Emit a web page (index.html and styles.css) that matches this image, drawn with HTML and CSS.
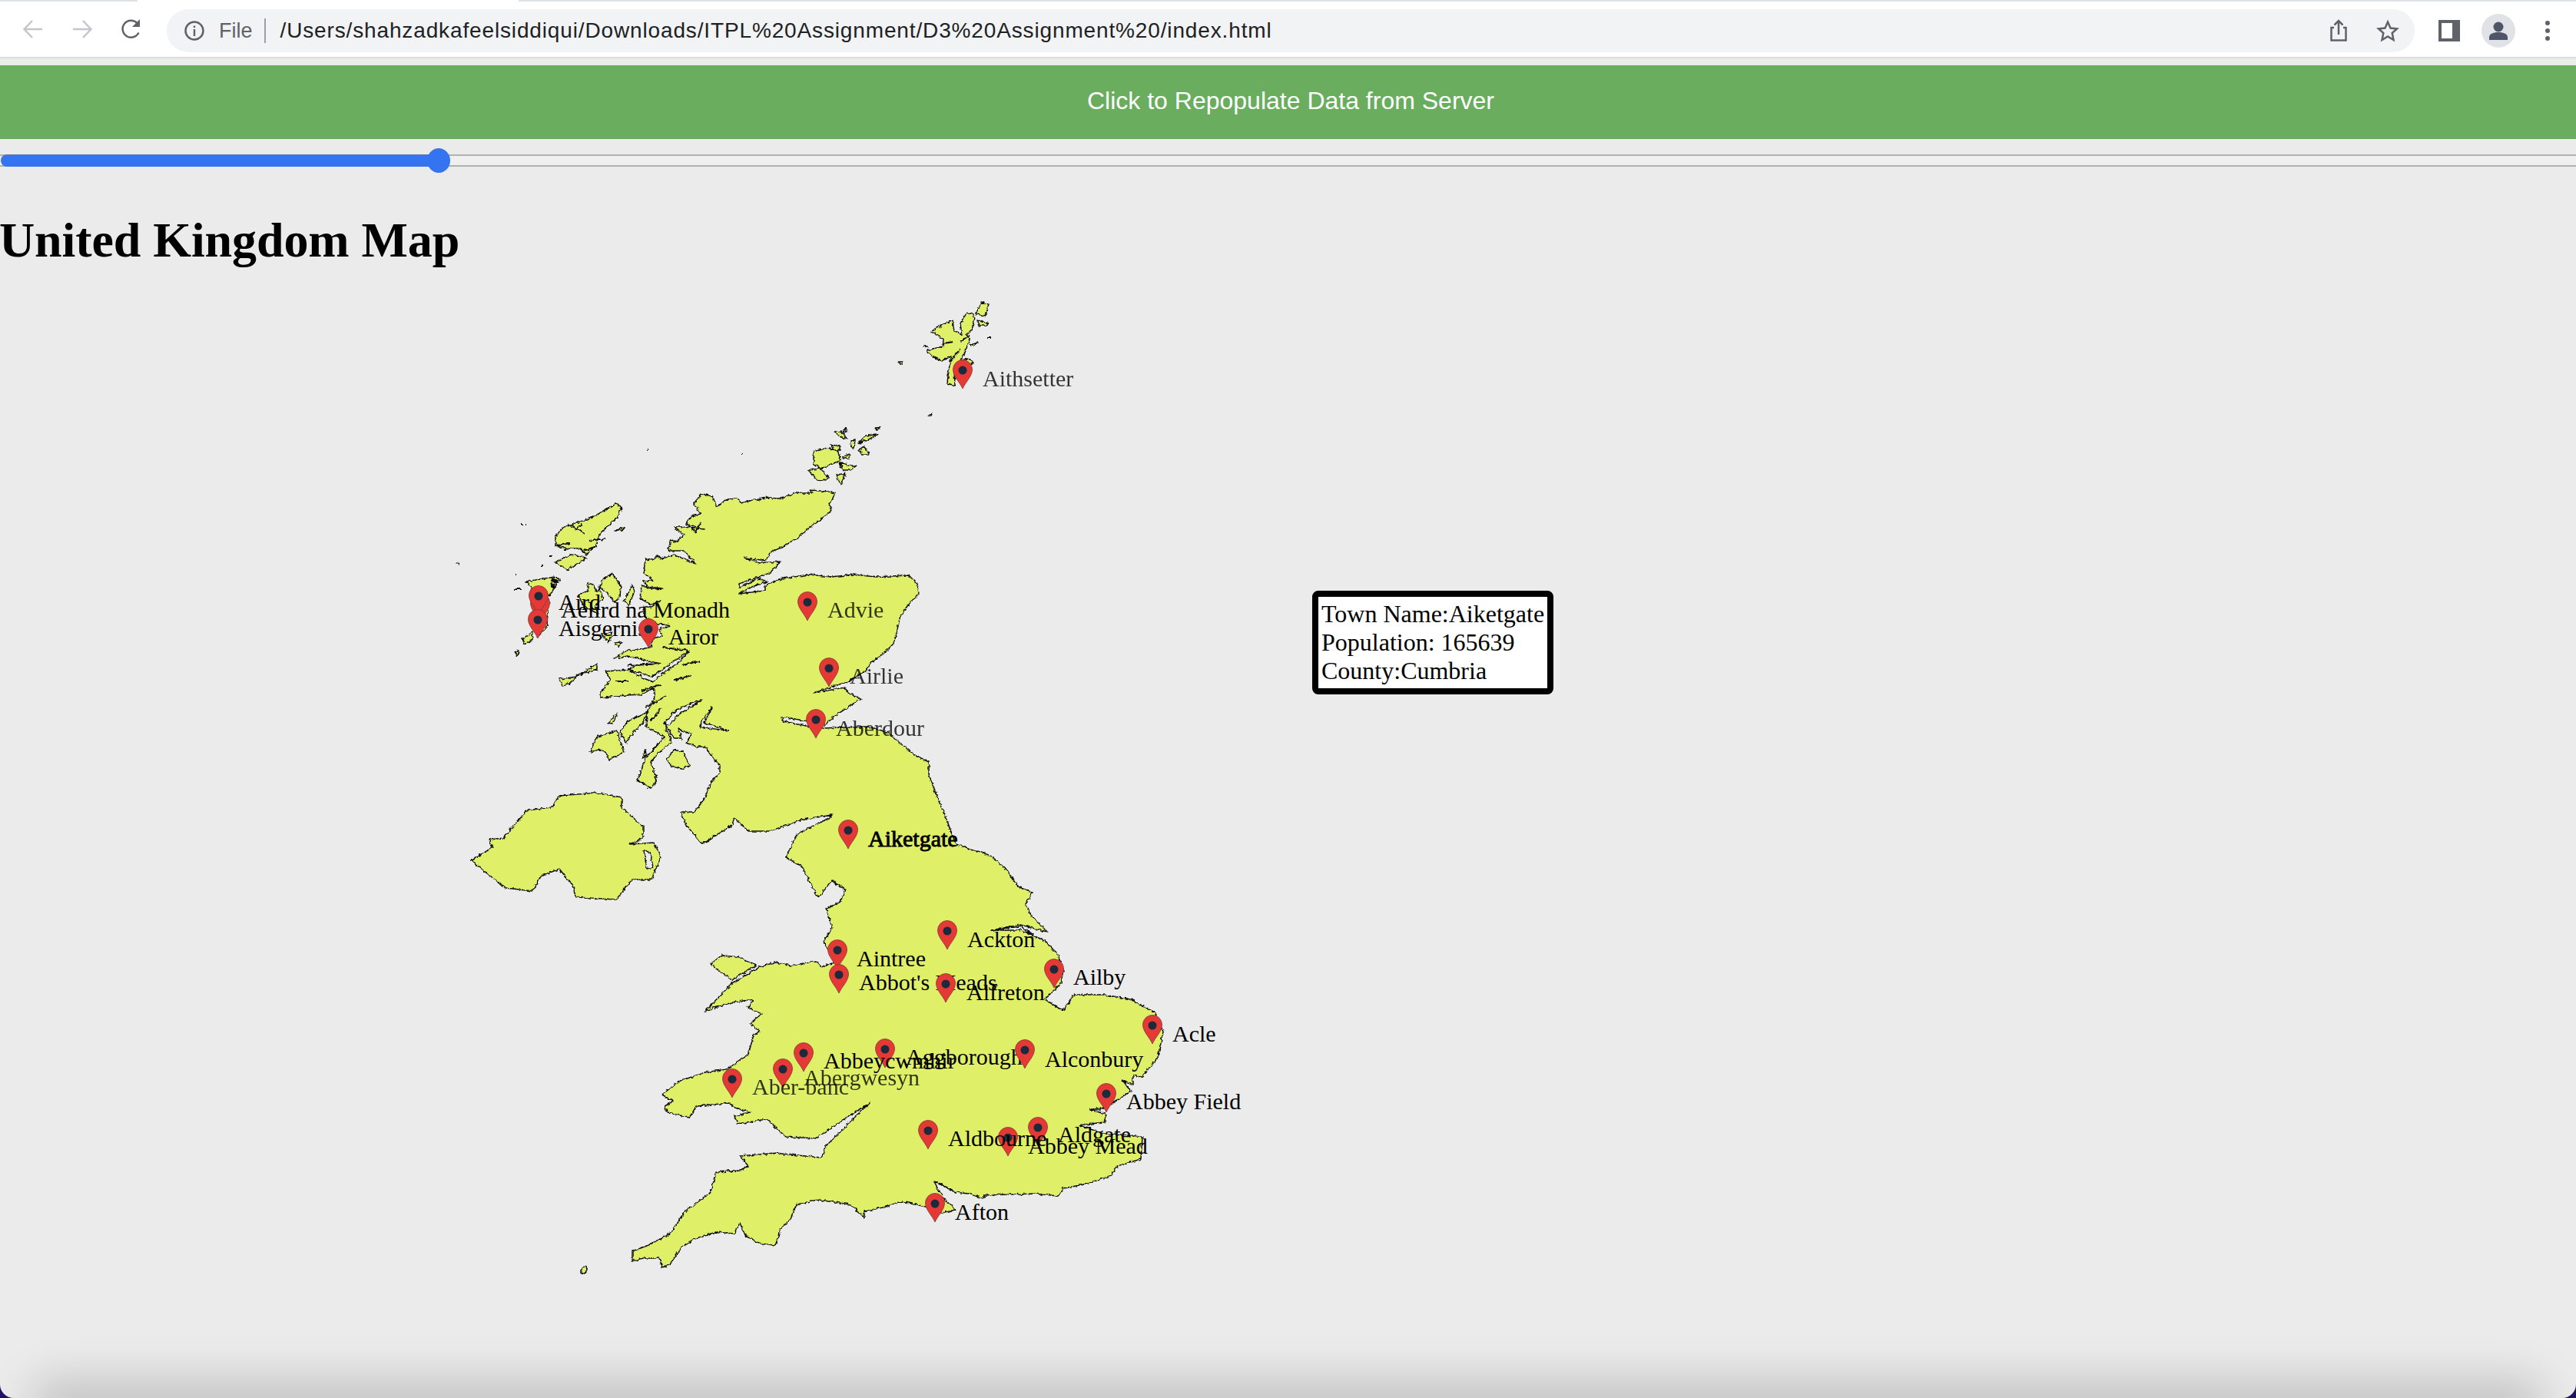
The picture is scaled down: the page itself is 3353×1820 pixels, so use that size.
FILE: index.html
```html
<!doctype html>
<html>

<head>
	<meta charset=utf-8>
	<title>United Kingdom Map</title>
	<link rel="stylesheet" href="styles.css">
</head>

<body>
	<div class="page">
		<header class="toolbar">
			<div class="tabstrip"><span class="tabstrip-gap"></span></div>
			<div class="toolbar-row">
				<div class="nav">
					<svg class="nav-icon" viewBox="0 0 30 30"><path class="ic-faint" d="M27 15H4M14 4L3.5 15L14 26"/></svg>
					<svg class="nav-icon" viewBox="0 0 30 30"><path class="ic-faint" d="M3 15H26M16 4L26.500 15L16 26"/></svg>
					<svg class="nav-icon" viewBox="0 0 30 30"><path class="ic-dark" d="M24.500 19.500A11 11 0 1 1 22.500 7"/><path class="ic-fill" d="M26 2V12H16Z"/></svg>
				</div>
				<div class="omnibox">
					<svg class="info-icon" viewBox="0 0 26 26"><circle class="ic-dark" cx="13" cy="13" r="11.500"/><path class="ic-fill" d="M11.800 11h2.400v9h-2.400zM11.800 6.500h2.400v2.400h-2.400z"/></svg>
					<span class="scheme">File</span>
					<span class="divider"></span>
					<span class="url">/Users/shahzadkafeelsiddiqui/Downloads/ITPL%20Assignment/D3%20Assignment%20/index.html</span>
					<span class="spacer"></span>
					<svg class="omni-icon" viewBox="0 0 30 30"><path class="ic-dark" d="M9 11H5.500V27.500H24.500V11H21M15 20V2M9.500 7.500L15 2L20.500 7.500"/></svg>
					<svg class="omni-icon" viewBox="0 0 30 30"><path class="ic-dark" d="M15 3.500L18.500 11.500L27 12.500L20.700 18L22.500 27L15 22.500L7.500 27L9.300 18L3 12.500L11.500 11.500Z"/></svg>
				</div>
				<div class="tools">
					<svg class="panel-icon" viewBox="0 0 28 28"><path class="ic-fill" d="M0 0H28V28H0ZM4 4V24H18V4Z"/></svg>
					<span class="avatar">
						<svg viewBox="0 0 44 44"><circle cx="22" cy="17" r="6.500"/><path d="M10 34V31C10 26 15 24 22 24S34 26 34 31V34Z"/></svg>
					</span>
					<span class="kebab"><i></i><i></i><i></i></span>
				</div>
			</div>
		</header>

		<button class="repopulate">Click to Repopulate Data from Server</button>

		<div class="slider">
			<div class="slider-track"></div>
			<div class="slider-fill" style="width:571px"></div>
			<div class="slider-thumb" style="left:556px"></div>
		</div>

		<h1 class="title">United Kingdom Map</h1>

		<svg class="map" viewBox="0 370 3353 1450" width="3353" height="1450">
			<defs>
				<filter id="rough" x="-5%" y="-5%" width="110%" height="110%">
					<feTurbulence type="fractalNoise" baseFrequency="0.22" numOctaves="3" seed="4"/>
					<feDisplacementMap in="SourceGraphic" scale="5" xChannelSelector="R" yChannelSelector="G"/>
				</filter>
				<g id="pin">
					<path class="pin-body" d="M0 24C-4 15 -12.500 8 -12.500 -1A12.500 12.500 0 1 1 12.500 -1C12.500 8 4 15 0 24Z"/>
					<circle class="pin-dot" r="5.500"/>
				</g>
			</defs>

			<g class="land" filter="url(#rough)">
				<!-- great britain -->
				<path d="M913 644L927 647L933 660L947 651L959 650L965 656L979 652L999 649L1013 650L1036 643L1059 643L1054 639L1079 641L1087 643L1079 660L1083 665L1068 678L1054 687L1041 699L1019 713L1002 720L997 731L969 727L988 734L1016 732L1002 747L962 761L962 766L988 754L999 758L979 765L961 774L996 770L996 763L1019 754L1054 749L1082 752L1111 749L1140 752L1183 750L1194 761L1196 774L1183 787L1171 805L1168 821L1163 839L1148 854L1134 863L1128 874L1105 888L1059 903L1100 896L1102 901L1120 911L1105 921L1088 932L1074 944L1018 934L1019 940L1054 947L1071 949L1097 948L1134 948L1157 955L1171 968L1191 984L1209 993L1209 1008L1220 1040L1230 1062L1244 1100L1290 1115L1311 1134L1325 1155L1344 1163L1335 1178L1342 1193L1363 1214L1328 1205L1290 1212L1328 1211L1360 1226L1377 1243L1384 1264L1381 1281L1360 1302L1384 1317L1398 1296L1437 1296L1472 1302L1503 1319L1514 1344L1507 1378L1486 1403L1475 1401L1475 1414L1461 1407L1472 1422L1451 1435L1433 1445L1419 1445L1440 1452L1437 1462L1405 1466L1437 1477L1487 1481L1485 1510L1454 1519L1447 1531L1416 1542L1384 1548L1377 1558L1346 1555L1283 1557L1279 1561L1261 1555L1244 1553L1223 1542L1216 1539L1223 1553L1230 1563L1244 1576L1226 1580L1205 1572L1174 1565L1153 1572L1125 1578L1125 1586L1107 1569L1065 1563L1037 1569L1029 1588L1016 1601L1009 1622L988 1620L970 1609L963 1593L956 1607L932 1605L904 1614L886 1626L872 1647L862 1651L858 1639L837 1639L823 1643L823 1630L844 1622L872 1607L890 1580L925 1553L932 1527L963 1525L974 1519L963 1506L1009 1502L1069 1508L1076 1492L1114 1454L1132 1437L1093 1462L1062 1483L1023 1481L998 1458L960 1464L956 1454L977 1449L956 1443L949 1437L907 1441L897 1456L869 1449L865 1441L876 1435L862 1426L883 1409L918 1397L946 1393L974 1374L981 1348L989 1344L977 1334L991 1321L974 1313L981 1302L953 1306L918 1317L953 1281L988 1260L1009 1254L1030 1258L1062 1252L1069 1260L1086 1254L1072 1226L1083 1209L1076 1184L1093 1176L1100 1159L1083 1148L1065 1169L1055 1151L1044 1129L1023 1117L1037 1087L1079 1066L1083 1062L1044 1068L1002 1083L974 1083L956 1066L953 1075L914 1100L893 1075L886 1058L904 1058L917 1040L927 1017L937 1007L937 998L917 973L907 973L893 968L900 957L883 950L887 962L877 962L865 942L868 953L875 968L860 978L847 993L855 1017L847 1027L830 1017L840 988L855 972L865 960L841 947L842 930L853 907L850 897L835 905L800 907L782 910L782 903L795 885L788 875L817 873L830 867L860 865L817 855L800 858L815 848L832 847L847 843L850 832L862 829L857 820L873 816L857 813L838 803L837 790L847 792L860 783L847 788L833 780L835 763L850 768L863 767L843 765L837 757L850 757L838 747L840 729L850 730L855 725L863 728L877 723L890 728L905 735L890 718L870 718L873 703L880 707L890 697L877 687L890 687L917 690L893 683L900 673L912 670L903 657Z"/>
				<path class="loch" d="M817 873L838 884L850 889L862 878L885 862L897 848L880 860L862 873L848 882L830 876Z"/>
				<path class="loch" d="M865 942L880 925L905 915L913 913L882 932L872 945Z"/>
				<path class="loch" d="M913 940L927 922L917 942L948 952L912 948Z"/>
				<path class="loch" d="M1290 1212L1328 1207L1345 1217L1328 1212Z"/>
				<path class="cut" d="M860 865L817 867M910 862L887 867M900 880L877 887M867 907L840 922M860 923L847 940M863 844L897 848M800 888L817 888M893 683L905 692M905 695L912 680M835 900L860 892"/>
				<!-- northern ireland -->
				<path d="M613 1121L641 1104L637 1094L655 1092L686 1056L718 1052L728 1037L777 1033L809 1039L809 1052L837 1077L837 1092L820 1100L851 1098L860 1117L848 1146L823 1146L802 1172L749 1169L746 1155L728 1132L704 1142L693 1161L658 1157L634 1138Z"/>
				<path class="loch" d="M838 1108L846 1110L850 1130L842 1132Z"/>
				<!-- anglesey -->
				<path d="M925 1256L939 1245L963 1247L984 1258L953 1277L932 1262Z"/>
				<!-- hebrides -->
				<path d="M803 656L809 663L803 675L792 685L780 698L775 712L763 723L755 715L740 715L723 712L723 700L732 688L747 683L770 675L788 665Z"/>
				<path class="cut" d="M740 683L760 695M723 712L742 708M767 705L788 702M760 718L777 712M748 692L758 682"/>
				<path d="M723 733L743 723L757 725L763 728L738 743Z"/>
				<path d="M800 692L812 687L810 692Z"/>
				<path d="M685 758L703 755L723 752L728 755L720 770L715 777L695 772Z"/>
				<path class="cut thick" d="M718 755L726 760M716 760L722 766"/>
				<path d="M703 787L715 782L713 797L712 817L700 830Z"/>
				<path d="M680 833L693 823L693 835L683 840Z"/>
				<path d="M670 850L675 848L673 855Z"/>
				<path class="cut" d="M678 683h2M683 683h2M670 768h10M670 749h2M715 725h3M735 717h2M705 737h3"/>
				<path d="M785 755L797 748L808 763L807 778L800 785L790 772L780 765L785 780L775 790L778 800L760 790L753 776L765 770L765 760L772 762L778 772Z"/>
				<path d="M813 783L823 763L825 772L818 790Z"/>
				<path d="M783 825L797 825L793 837L785 830Z"/>
				<path d="M800 838L808 837L805 843Z"/>
				<path d="M728 885L750 882L777 865L777 872L753 880L740 892L732 893Z"/>
				<path d="M792 942L802 930L803 933L797 943Z"/>
				<path d="M807 955L817 940L843 928L838 940L820 960L815 968Z"/>
				<path d="M768 980L777 960L803 952L812 980L793 990L788 980L780 977Z"/>
				<path d="M837 987L840 977L841 985Z"/>
				<path d="M868 990L877 977L890 980L897 998L887 1002L873 998Z"/>
				<!-- shetland -->
				<path d="M1207 457L1227 452L1228 443L1213 433L1220 427L1230 422L1240 418L1242 432L1252 437L1250 422L1258 408L1267 410L1268 418L1265 430L1257 437L1262 443L1257 457L1250 470L1260 468L1267 473L1257 477L1242 483L1243 503L1233 500L1235 483L1238 465L1227 470L1217 467L1207 460Z"/>
				<path class="cut" d="M1228 448L1240 446M1238 470L1250 455M1250 445L1262 438"/>
				<path d="M1270 410L1277 395L1287 397L1282 412Z"/>
				<path d="M1272 418L1287 422L1283 425L1275 425Z"/>
				<path d="M1263 450L1273 446L1268 452Z"/>
				<path d="M1203 451L1208 452L1207 453Z"/>
				<path d="M1170 472L1175 472L1175 476L1172 475Z"/>
				<path d="M1209 542L1213 539L1212 543Z"/>
				<path class="cut" d="M1285 441H1290"/>
				<!-- orkney -->
				<path d="M1059 589L1077 584L1091 589L1094 600L1079 607L1068 611L1059 604Z"/>
				<path d="M1052 613L1068 611L1079 624L1065 627Z"/>
				<path d="M1093 603L1107 607L1115 607L1107 613L1097 613Z"/>
				<path d="M1088 620L1100 617L1095 632Z"/>
				<path d="M1082 580L1093 582L1093 587L1085 587Z"/>
				<path d="M1085 563L1095 563L1103 573L1095 570Z"/>
				<path d="M1100 558L1103 563L1098 564Z"/>
				<path d="M1107 575L1113 573L1112 585L1108 583Z"/>
				<path d="M1117 578L1127 568L1142 567L1127 575Z"/>
				<path d="M1139 558L1145 557L1142 562Z"/>
				<path d="M1118 587L1125 583L1132 592L1122 592Z"/>
				<path d="M1098 595L1107 593L1105 598L1098 598Z"/>
				<!-- specks -->
				<path class="cut" d="M842 587h2M814 590h1M966 591h1M594 733l4 2"/>
				<path d="M757 1652L763 1648L764 1656L757 1660Z"/>
			</g>

			<use href="#pin" x="1253" y="483"/><text class="label faded" x="1279" y="502">Aithsetter</text>
			<use href="#pin" x="1051" y="785"/><text class="label faded" x="1077" y="803">Advie</text>
			<use href="#pin" x="1079" y="871"/><text class="label faded" x="1106" y="889">Airlie</text>
			<use href="#pin" x="1062" y="938"/><text class="label faded" x="1088" y="957">Aberdour</text>
			<use href="#pin" x="703" y="787"/><text class="label" x="730" y="803">Aelird na Monadh</text>
			<use href="#pin" x="701" y="777"/><text class="label" x="727" y="793">Aird</text>
			<use href="#pin" x="700" y="808"/><text class="label" x="727" y="827">Aisgernis</text>
			<use href="#pin" x="844" y="820"/><text class="label" x="870" y="838">Airor</text>
			<use href="#pin" x="1104" y="1082"/><text class="label label-active" x="1130" y="1101">Aiketgate</text>
			<use href="#pin" x="1233" y="1213"/><text class="label" x="1259" y="1232">Ackton</text>
			<use href="#pin" x="1090" y="1238"/><text class="label" x="1115" y="1257">Aintree</text>
			<use href="#pin" x="1092" y="1270"/><text class="label" x="1118" y="1288">Abbot's Meads</text>
			<use href="#pin" x="1231" y="1282"/><text class="label" x="1258" y="1301">Alfreton</text>
			<use href="#pin" x="1372" y="1263"/><text class="label" x="1397" y="1281">Ailby</text>
			<use href="#pin" x="1500" y="1336"/><text class="label" x="1526" y="1355">Acle</text>
			<use href="#pin" x="1152" y="1367"/><text class="label" x="1179" y="1385">Aggborough</text>
			<use href="#pin" x="1046" y="1372"/><text class="label" x="1072" y="1390">Abbeycwmhir</text>
			<use href="#pin" x="1019" y="1393"/><text class="label faded" x="1046" y="1412">Abergwesyn</text>
			<use href="#pin" x="953" y="1406"/><text class="label faded" x="979" y="1424">Aber-banc</text>
			<use href="#pin" x="1334" y="1368"/><text class="label" x="1360" y="1388">Alconbury</text>
			<use href="#pin" x="1440" y="1425"/><text class="label" x="1466" y="1443">Abbey Field</text>
			<use href="#pin" x="1351" y="1469"/><text class="label" x="1377" y="1486">Aldgate</text>
			<use href="#pin" x="1312" y="1482"/><text class="label" x="1338" y="1501">Abbey Mead</text>
			<use href="#pin" x="1208" y="1473"/><text class="label" x="1234" y="1491">Aldbourne</text>
			<use href="#pin" x="1217" y="1568"/><text class="label" x="1243" y="1587">Afton</text>
		</svg>

		<div class="tooltip">
			Town Name:Aiketgate<br>
			Population: 165639<br>
			County:Cumbria
		</div>

		<div class="dock-shadow"></div>
	</div>
</body>
</html>
```

FILE: styles.css
```css
html, body{
	width: 100%;
	height: 100%;
	margin: 0; padding: 0;
	background-color: #1d1464;
}

.page{
	position: relative;
	width: 3353px;
	height: 1820px;
	overflow: hidden;
	background-color: #ebebeb;
	border-radius: 0 0 18px 18px;
	font-family: "Liberation Serif", serif;
}

/* browser bar */
.toolbar{
	height: 76px;
	margin-bottom: 9px;
	background-color: #fff;
	border-bottom: 2px solid #dcdddf;
	box-sizing: border-box;
}

.tabstrip{
	height: 2px;
	background-color: #dee1e6;
	padding-left: 179px;
}

.tabstrip-gap{
	display: block;
	width: 496px;
	height: 2px;
	background-color: #fff;
}

.toolbar-row{
	display: flex;
	align-items: center;
	height: 72px;
	font-family: "Liberation Sans", sans-serif;
}

.nav{
	display: flex;
	gap: 34px;
	width: 217px;
	padding-left: 28px;
	box-sizing: border-box;
}

.nav-icon{
	width: 30px;
	height: 30px;
}

.ic-faint, .ic-dark{
	fill: none;
	stroke-width: 2.500;
}

.ic-faint{
	stroke: #c4c6c9;
}

.ic-dark{
	stroke: #5f6368;
}

.ic-fill{
	fill: #5f6368;
}

.omnibox{
	display: flex;
	align-items: center;
	width: 2926px;
	height: 56px;
	margin-top: 4px;
	padding: 0 20px 0 23px;
	box-sizing: border-box;
	background-color: #f1f3f4;
	border-radius: 28px;
}

.info-icon{
	width: 26px;
	height: 26px;
	margin-right: 19px;
}

.scheme{
	font-size: 27px;
	color: #5f6368;
}

.divider{
	width: 2px;
	height: 32px;
	margin: 0 19px 0 15px;
	background-color: #9aa0a6;
}

.url{
	font-size: 28px;
	letter-spacing: 0.86px;
	color: #202124;
	white-space: nowrap;
}

.spacer{
	flex: 1;
}

.omni-icon{
	width: 30px;
	height: 30px;
	margin-left: 34px;
}

.tools{
	display: flex;
	align-items: center;
	margin-left: 31px;
	margin-top: 4px;
}

.panel-icon{
	width: 28px;
	height: 28px;
}

.avatar{
	display: block;
	width: 44px;
	height: 44px;
	margin-left: 28px;
	border-radius: 50%;
	background-color: #e0e2e7;
}

.avatar svg{
	display: block;
	fill: #4d5566;
}

.kebab{
	display: flex;
	flex-direction: column;
	gap: 4px;
	margin-left: 39px;
}

.kebab i{
	display: block;
	width: 6px;
	height: 6px;
	border-radius: 50%;
	background-color: #5f6368;
}

/* page */
.repopulate{
	display: block;
	width: 100%;
	height: 96px;
	border: 0;
	padding: 0 0 3px 7px;
	background-color: #6aad5e;
	color: #fff;
	font-family: "Liberation Sans", sans-serif;
	font-size: 32px;
}

.slider{
	position: relative;
	height: 32px;
	margin-top: 12px;
}

.slider-track{
	position: absolute;
	left: 0; right: 0; top: 8px;
	height: 16px;
	border-top: 2px solid #b0b0b0;
	border-bottom: 2px solid #b0b0b0;
	box-sizing: border-box;
	background-color: #efefef;
}

.slider-fill{
	position: absolute;
	left: 1px; top: 8px;
	height: 16px;
	border-top: 2px solid #5575b0;
	border-radius: 8px 0 0 8px;
	box-sizing: border-box;
	background-color: #3574f0;
}

.slider-thumb{
	position: absolute;
	top: 0;
	width: 30px;
	height: 32px;
	border-radius: 50%;
	background-color: #3574f0;
}

.title{
	margin: 51px 0 20px -1px;
	font-size: 64px;
	line-height: 73px;
	letter-spacing: -0.1px;
	font-weight: bold;
	color: #000;
}

.map{
	display: block;
}

.land path{
	fill: #dff067;
	stroke: #111;
	stroke-width: 1.500;
	stroke-linejoin: round;
}

.land .loch{
	fill: #ebebeb;
}

.land .cut{
	fill: none;
	stroke-width: 2;
}

.land .thick{
	stroke-width: 5;
}

.pin-body{
	fill: #e53935;
	stroke: #7a3a38;
	stroke-width: 0.800;
}

.pin-dot{
	fill: #1b2a3c;
}

.label{
	font-family: "Liberation Serif", serif;
	font-size: 30px;
	fill: #000;
	transform: translateY(2px);
}

.faded{
	opacity: 0.78;
}

.label-active{
	stroke: #000;
	stroke-width: 0.900;
}

.tooltip{
	position: absolute;
	left: 1708px;
	top: 769px;
	width: 314px;
	height: 135px;
	padding: 4px;
	box-sizing: border-box;
	border: 8px solid #000;
	border-radius: 8px;
	background-color: #fff;
	font-size: 32px;
	line-height: 37px;
	white-space: nowrap;
	color: #000;
}

.dock-shadow{
	position: absolute;
	left: 70px; right: 70px; bottom: -14px;
	height: 10px;
	box-shadow: 0 0 60px 24px rgba(0, 0, 0, 0.2);
}
```
